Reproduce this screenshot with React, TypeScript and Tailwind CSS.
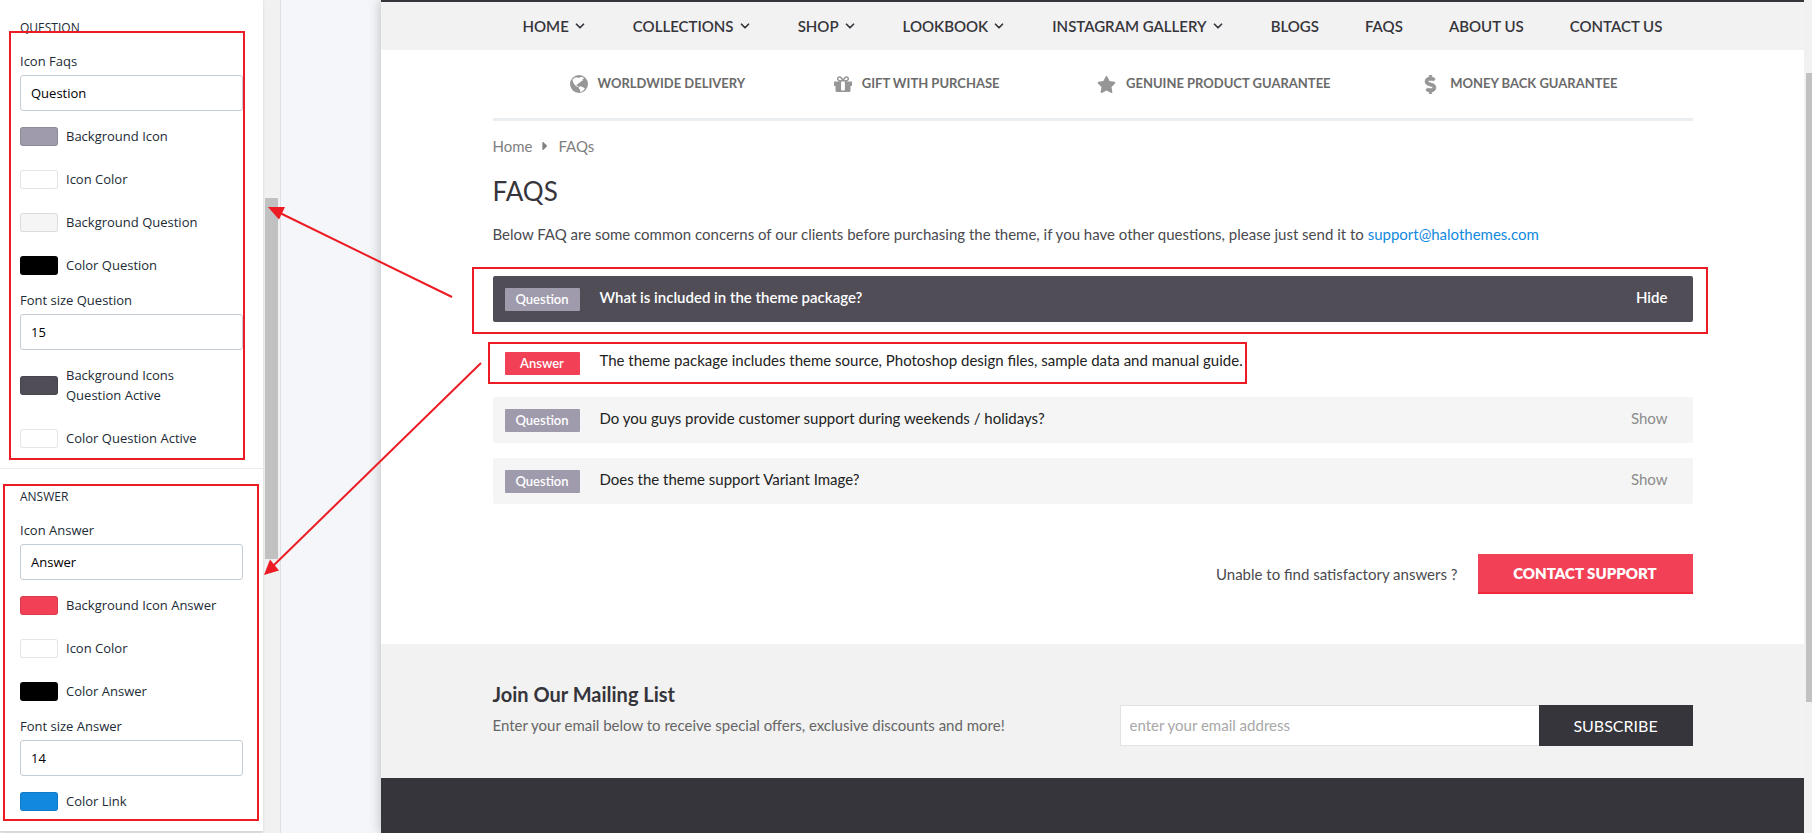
import React from "react";
import { FaStar, FaDollarSign, FaCaretRight } from "react-icons/fa";
import { ChevronDown } from "lucide-react";

function Field({ id, label, value }: { id: string; label: string; value: string }) {
  return (
    <div className="flex flex-col gap-1 pt-[7px]">
      <label htmlFor={id}>{label}</label>
      <input
        id={id}
        type="text"
        defaultValue={value}
        className="h-9 w-full rounded-[3px] border border-[#c4cdd5] bg-white px-2.5 text-black outline-none"
      />
    </div>
  );
}

function ColorRow({ label, swatch }: { label: string; swatch: string }) {
  return (
    <div className="flex items-center gap-2 pt-[15px] pb-2">
      <button
        type="button"
        aria-label={label}
        className={`h-[19px] w-[38px] shrink-0 rounded-[3px] border border-black/10 ${swatch}`}
      />
      <span className="max-w-[160px]">{label}</span>
    </div>
  );
}

function Panel({ title, className, children }: { title: string; className: string; children: React.ReactNode }) {
  return (
    <section className={`px-5 pt-[18px] pb-3 ${className}`}>
      <h2 className="pb-1.5 text-xs leading-5 font-medium">{title}</h2>
      {children}
    </section>
  );
}

function GlobeIcon() {
  return (
    <svg width="18" height="18" viewBox="0 0 18 18" aria-hidden="true">
      <circle cx="9" cy="9" r="9" fill="#969696" />
      <path d="M2.600 4.500 4.600 2.700 7 2.200l1.600.9 1.500-.8 2.600-.2 1.300 1.600-1.700.8.600 1.300-1.600.2-1.300 1.400-1.500.8-.8 1.400-1.200-.2.300 1.300 1.400.6.900 1.200-2-.7-2.300-1.900-1.400-2.200-.7-1.600z" fill="#fff" />
      <path d="m9 12 1.700-.7 1.800.7 2.300 1.200-.7 1.500-1.800 1.600-2 .7-.3-2.200-1.100-1.300z" fill="#fff" />
    </svg>
  );
}

function GiftIcon() {
  return (
    <svg width="18" height="16" viewBox="0 192 1536 1344" fill="#969696" aria-hidden="true">
      <path d="M928 1356v-716h-320v716q0 25 18 38.500t46 13.500h192q28 0 46-13.500t18-38.500zM472 512h195l-126-161q-26-31-69-31-40 0-68 28t-28 68 28 68 68 28zm688-96q0-40-28-68t-68-28q-43 0-69 31l-125 161h194q40 0 68-28t28-68zm376 256v320q0 14-9 23t-23 9h-96v416q0 40-28 68t-68 28h-1088q-40 0-68-28t-28-68v-416h-96q-14 0-23-9t-9-23v-320q0-14 9-23t23-9h440q-93 0-158.500-65.500t-65.500-158.500 65.500-158.500 158.500-65.500q107 0 168 77l128 165 128-165q61-77 168-77 93 0 158.500 65.500t65.500 158.500-65.500 158.500-158.500 65.500h440q14 0 23 9t9 23z" />
    </svg>
  );
}

const nav = [
  { label: "HOME", menu: true },
  { label: "COLLECTIONS", menu: true },
  { label: "SHOP", menu: true },
  { label: "LOOKBOOK", menu: true },
  { label: "INSTAGRAM GALLERY", menu: true },
  { label: "BLOGS", menu: false },
  { label: "FAQS", menu: false },
  { label: "ABOUT US", menu: false },
  { label: "CONTACT US", menu: false },
];

const services = [
  { label: "WORLDWIDE DELIVERY", icon: <GlobeIcon /> },
  { label: "GIFT WITH PURCHASE", icon: <GiftIcon /> },
  { label: "GENUINE PRODUCT GUARANTEE", icon: <FaStar size={19} className="text-[#969696]" /> },
  {
    label: "MONEY BACK GUARANTEE",
    icon: <FaDollarSign size={19} className="text-[#969696]" stroke="currentColor" strokeWidth={24} />,
  },
];

function Tag({ children, color }: { children: React.ReactNode; color: string }) {
  return (
    <span className={`w-[75px] shrink-0 rounded-[1px] text-center text-[13px] leading-[23px] font-semibold text-white ${color}`}>
      {children}
    </span>
  );
}

function Question({ text, open }: { text: string; open?: boolean }) {
  return (
    <button
      type="button"
      aria-expanded={!!open}
      className={`flex h-[46px] w-full items-center rounded-[2px] pr-[25px] pl-3 text-left text-[15px] ${
        open ? "bg-[#504d57] font-semibold text-white" : "bg-[#f5f5f5] text-[#222]"
      }`}
    >
      <Tag color="bg-[#9f9aac]">Question</Tag>
      <span className="grow pb-[3px] pl-5">{text}</span>
      <span className={open ? "pb-[3px]" : "pb-[3px] text-[#8b8b8b]"}>{open ? "Hide" : "Show"}</span>
    </button>
  );
}

export default function App() {
  return (
    <div className="relative flex min-h-screen overflow-hidden bg-[#f4f6fa] font-['Lato',sans-serif]">
      <aside className="flex w-[281px] shrink-0 border-r border-[#dfe1e6] bg-[#f1f1f1] font-['Open_Sans',sans-serif] text-[13px] leading-5 text-[#212b36]">
        <div className="grow self-start border-b border-[#d8d8d8] bg-white shadow-sm">
          <Panel title="QUESTION" className="border-b border-[#ebebeb]">
            <Field id="icon-faqs" label="Icon Faqs" value="Question" />
            <ColorRow label="Background Icon" swatch="bg-[#9f9aac]" />
            <ColorRow label="Icon Color" swatch="bg-white" />
            <ColorRow label="Background Question" swatch="bg-[#f5f5f5]" />
            <ColorRow label="Color Question" swatch="bg-black" />
            <Field id="size-question" label="Font size Question" value="15" />
            <ColorRow label="Background Icons Question Active" swatch="bg-[#504d57]" />
            <ColorRow label="Color Question Active" swatch="bg-white" />
          </Panel>
          <Panel title="ANSWER" className="">
            <Field id="icon-answer" label="Icon Answer" value="Answer" />
            <ColorRow label="Background Icon Answer" swatch="bg-[#f24156]" />
            <ColorRow label="Icon Color" swatch="bg-white" />
            <ColorRow label="Color Answer" swatch="bg-black" />
            <Field id="size-answer" label="Font size Answer" value="14" />
            <ColorRow label="Color Link" swatch="bg-[#1289de]" />
          </Panel>
        </div>
        <div className="w-[17px] shrink-0 px-0.5 pt-[198px]">
          <div className="h-[361px] bg-[#c1c1c1]" />
        </div>
      </aside>

      <div className="ml-[100px] flex min-w-0 grow shadow-[0_0_12px_rgba(0,0,0,0.25)]">
        <main className="flex min-w-0 grow flex-col bg-white text-[#4a4a4f]">
          <nav className="border-t-2 border-[#36353b] bg-[#f2f2f2]">
            <ul className="mx-auto flex h-12 max-w-[1200px] items-center justify-between px-[30px] text-[15px] font-semibold text-[#36353b]">
              {nav.map((n) => (
                <li key={n.label}>
                  <a href="#" className="flex items-center gap-1 whitespace-nowrap">
                    {n.label}
                    {n.menu && <ChevronDown size={14} strokeWidth={3} />}
                  </a>
                </li>
              ))}
            </ul>
          </nav>

          <div className="mx-auto w-full max-w-[1200px]">
            <ul className="grid h-[71px] grid-cols-[264fr_263fr_324fr_271fr] items-center border-b-[3px] border-[#ebeef0] pl-[77px] text-[13px] font-bold text-[#6b6b6b]">
              {services.map(({ label, icon }) => (
                <li key={label} className="flex items-center gap-2.5 whitespace-nowrap">
                  {icon}
                  {label}
                </li>
              ))}
            </ul>

            <ol className="flex items-center gap-1.5 pt-[15px] text-[15px] leading-5 text-[#808080]">
              <li><a href="#">Home</a></li>
              <li aria-hidden="true"><FaCaretRight size={14} /></li>
              <li>FAQs</li>
            </ol>
            <h1 className="pt-[19px] text-[26px] leading-8 text-[#36353b]">FAQS</h1>
            <p className="pt-[17px] text-[15px] leading-5">
              Below FAQ are some common concerns of our clients before purchasing the theme, if you have other questions, please just send it to{" "}
              <a href="mailto:support@halothemes.com" className="text-[#1289de]">support@halothemes.com</a>
            </p>

            <div className="flex flex-col gap-[15px] pt-8">
              <div>
                <Question text="What is included in the theme package?" open />
                <div className="flex pt-[30px] pb-[7px] pl-3 text-[15px] leading-4 text-[#222]">
                  <Tag color="bg-[#f24156]">Answer</Tag>
                  <p className="pl-5">The theme package includes theme source, Photoshop design files, sample data and manual guide.</p>
                </div>
              </div>
              <Question text="Do you guys provide customer support during weekends / holidays?" />
              <Question text="Does the theme support Variant Image?" />
            </div>

            <div className="flex items-center justify-end gap-5 pt-[50px] pb-[50px] text-[15px]">
              <span>Unable to find satisfactory answers ?</span>
              <button type="button" className="h-10 w-[215px] border-b-2 border-[#f02a3c] bg-[#f24156] text-[15px] font-extrabold text-white">
                CONTACT SUPPORT
              </button>
            </div>
          </div>

          <section className="bg-[#f2f2f2]">
            <div className="mx-auto flex h-[134px] max-w-[1200px] justify-between">
              <div className="pt-9">
                <h2 className="text-xl leading-7 font-bold text-[#36353b]">Join Our Mailing List</h2>
                <p className="pt-[5px] text-[15px] leading-6 text-[#666]">Enter your email below to receive special offers, exclusive discounts and more!</p>
              </div>
              <form className="mb-8 flex h-[41px] w-[573px] self-end">
                <input
                  type="email"
                  aria-label="Email address"
                  placeholder="enter your email address"
                  className="min-w-0 grow border border-r-0 border-[#e2e2e2] bg-white px-[9px] text-[15px] outline-none placeholder:text-[#a8a8a8]"
                />
                <button type="button" className="w-[154px] bg-[#36353b] text-base text-white">SUBSCRIBE</button>
              </form>
            </div>
          </section>
          <footer className="min-h-[55px] grow bg-[#36353b]" />
        </main>
        <div className="w-2 shrink-0 bg-[#f1f1f1] pt-[73px] pl-0.5">
          <div className="h-[629px] bg-[#c1c1c1]" />
        </div>
      </div>

      <svg className="pointer-events-none absolute top-0 left-0" width="1812" height="833" viewBox="0 0 1812 833" fill="none" stroke="#ed1c24" strokeWidth="2" aria-hidden="true">
        <rect x="10" y="32" width="234" height="427" />
        <rect x="4" y="485" width="254" height="335" />
        <rect x="473" y="268" width="1234" height="65" />
        <rect x="489" y="343" width="757" height="40" />
        <path d="M452 297 280 213" />
        <path d="M481 363 272 567" />
        <path d="M268 207h17l-6 12.500z" fill="#ed1c24" stroke="none" />
        <path d="M264 575l6-15.500 9 11z" fill="#ed1c24" stroke="none" />
      </svg>
    </div>
  );
}
